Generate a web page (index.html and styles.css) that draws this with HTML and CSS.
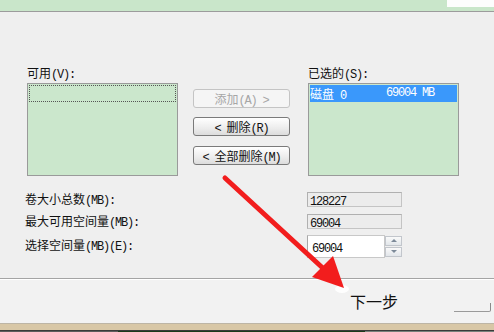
FILE: index.html
```html
<!DOCTYPE html>
<html lang="zh-CN">
<head>
<meta charset="utf-8">
<title>新建卷</title>
<link rel="stylesheet" href="styles.css">
</head>
<body>
<div class="screen">
  <div class="topband"><div class="topband-white"></div></div>
  <div class="main">
    <div class="lists">
      <div class="col col-left">
        <div class="label">可用<span class="en">(V):</span></div>
        <div class="listbox"><div class="focus-item"></div></div>
      </div>
      <div class="col col-buttons">
        <div class="btn btn-disabled">添加<span class="en">(A) &gt;</span></div>
        <div class="btn"><span class="en">&lt; </span>删除<span class="en">(R)</span></div>
        <div class="btn btn-last"><span class="en">&lt; </span>全部删除<span class="en">(M)</span></div>
      </div>
      <div class="col col-right">
        <div class="label">已选的<span class="en">(S):</span></div>
        <div class="listbox">
          <div class="item selected"><span class="disk-name">磁盘<span class="en"> 0</span></span><span class="en">69004 MB</span></div>
        </div>
      </div>
    </div>
    <div class="fields">
      <div class="field-label">卷大小总数<span class="en">(MB):</span></div>
      <div class="field readonly"><span class="en">128227</span></div>
      <div class="field-label">最大可用空间量<span class="en">(MB):</span></div>
      <div class="field readonly"><span class="en">69004</span></div>
      <div class="field-label">选择空间量<span class="en">(MB)(E):</span></div>
      <div class="spin">
        <div class="spin-input"><span class="en">69004</span></div>
        <div class="spin-buttons">
          <div class="spin-btn"><span class="tri-up"></span></div>
          <div class="spin-btn"><span class="tri-down"></span></div>
        </div>
      </div>
    </div>
  </div>
  <div class="footer">
    <div class="next-text">下一步</div>
    <div class="footer-btn"></div>
  </div>
  <div class="bottom-strip">
    <div class="strip-tan"></div>
    <div class="strip-dark"></div>
  </div>
  <svg class="arrow" width="494" height="332" viewBox="0 0 494 332">
    <ellipse cx="342" cy="289" rx="7" ry="4" fill="#ffffff" opacity="0.9"/>
    <line x1="225" y1="178" x2="326" y2="271" stroke="#f21d1d" stroke-width="5" stroke-linecap="round"/>
    <polygon points="344,288 312,277 333,256" fill="#f21d1d"/>
  </svg>
</div>
</body>
</html>
```
FILE: styles.css
```css
html, body {
  margin: 0;
  padding: 0;
}
body {
  background: #f0f0f0;
  font-family: "Noto Sans CJK SC", "Liberation Sans", sans-serif;
  font-size: 12px;
  color: #111;
}
.en {
  font-family: "Liberation Mono", "DejaVu Sans Mono", monospace;
  font-size: 12px;
  letter-spacing: -1.2px;
}
.screen {
  position: relative;
  width: 494px;
  height: 332px;
  overflow: hidden;
  background: #efefef;
}
.topband {
  height: 11px;
  background: #c9e6ca;
  border-bottom: 1px solid #9c9c9c;
  display: flex;
  justify-content: flex-end;
}
.topband-white {
  width: 47px;
  height: 7px;
  background: #fdfdfd;
}
.main {
  padding-top: 54px;
}
.lists {
  display: flex;
  padding-left: 27px;
}
.col-left, .col-right {
  width: 151px;
}
.col-buttons {
  width: 97px;
  margin-left: 15px;
  padding-top: 23px;
  display: flex;
  flex-direction: column;
  gap: 9px;
}
.col-right {
  margin-left: 18px;
}
.label {
  height: 14px;
  line-height: 14px;
  margin-bottom: 3px;
  white-space: nowrap;
}
.listbox {
  box-sizing: border-box;
  height: 93px;
  background: #cbe7cc;
  border: 1px solid #9a9a9a;
  padding: 1px;
}
.focus-item {
  height: 15px;
  border: 1px dotted #555;
}
.item {
  height: 17px;
  line-height: 17px;
  display: flex;
  white-space: pre;
}
.selected {
  background: #3a98fb;
  color: #fff;
}
.disk-name {
  width: 76px;
}
.btn {
  box-sizing: border-box;
  height: 19px;
  line-height: 17px;
  text-align: center;
  border: 1px solid #7a7a7a;
  border-radius: 3px;
  background: linear-gradient(#ffffff, #ececec 60%, #dcdcdc);
  white-space: pre;
}
.btn-disabled {
  border-color: #c4c4c4;
  background: #f5f5f5;
  color: #a6a6a6;
}
.btn-last {
  margin-top: 1px;
}
.fields {
  margin-top: 16px;
  padding-left: 25px;
  display: grid;
  grid-template-columns: 282px 95px;
  grid-template-rows: 15px 15px 23px;
  row-gap: 7px;
  align-items: center;
}
.field-label {
  line-height: 14px;
  white-space: nowrap;
}
.field {
  box-sizing: border-box;
  height: 15px;
  line-height: 13px;
  padding-left: 2px;
  border: 1px solid #c4c4c4;
  border-top-color: #b0b0b0;
  border-left-color: #b0b0b0;
  background: #ececec;
}
.fields > :nth-child(5),
.fields > :nth-child(6) {
  margin-top: -3px;
}
.spin {
  display: flex;
  height: 23px;
}
.spin-input {
  box-sizing: border-box;
  width: 78px;
  height: 23px;
  line-height: 21px;
  padding-left: 4px;
  background: #ffffff;
  border: 1px solid #c8c8c8;
  border-left-color: #a8a8a8;
}
.spin-buttons {
  width: 17px;
  display: flex;
  flex-direction: column;
  gap: 1px;
  padding: 1px 0;
  box-sizing: border-box;
}
.spin-btn {
  flex: 1;
  border: 1px solid #c2c6cc;
  background: linear-gradient(#fafafa, #e2e6ea);
  display: flex;
  align-items: center;
  justify-content: center;
}
.tri-up {
  width: 0;
  height: 0;
  border-left: 3px solid transparent;
  border-right: 3px solid transparent;
  border-bottom: 3px solid #7d8a99;
}
.tri-down {
  width: 0;
  height: 0;
  border-left: 3px solid transparent;
  border-right: 3px solid transparent;
  border-top: 3px solid #7d8a99;
}
.footer {
  margin-top: 19px;
  height: 44px;
  border-top: 1px solid #a4a4a4;
  box-shadow: inset 0 1px 0 #ffffff;
  background: #f2f2f2;
  display: flex;
  align-items: center;
  padding-left: 350px;
}
.next-text {
  font-size: 16px;
  line-height: 24px;
  color: #111;
  white-space: nowrap;
}
.footer-btn {
  box-sizing: border-box;
  width: 37px;
  height: 9px;
  margin-left: 56px;
  margin-top: 12px;
  border-right: 1px solid #8a8a8a;
  border-bottom: 1px solid #9a9a9a;
  border-bottom-right-radius: 2px;
}
.bottom-strip {
  height: 12px;
  border-top: 1px solid #bdb5a5;
  box-sizing: border-box;
}
.strip-tan {
  height: 6px;
  background: #d8c7a6;
}
.strip-dark {
  height: 5px;
  border-top: 1px solid #3a3a3a;
  background: linear-gradient(90deg, #5c5c5c 0 118px, #1b3a1b 118px 365px, #77807a 365px 100%);
}
.arrow {
  position: absolute;
  left: 0;
  top: 0;
  pointer-events: none;
}
```
